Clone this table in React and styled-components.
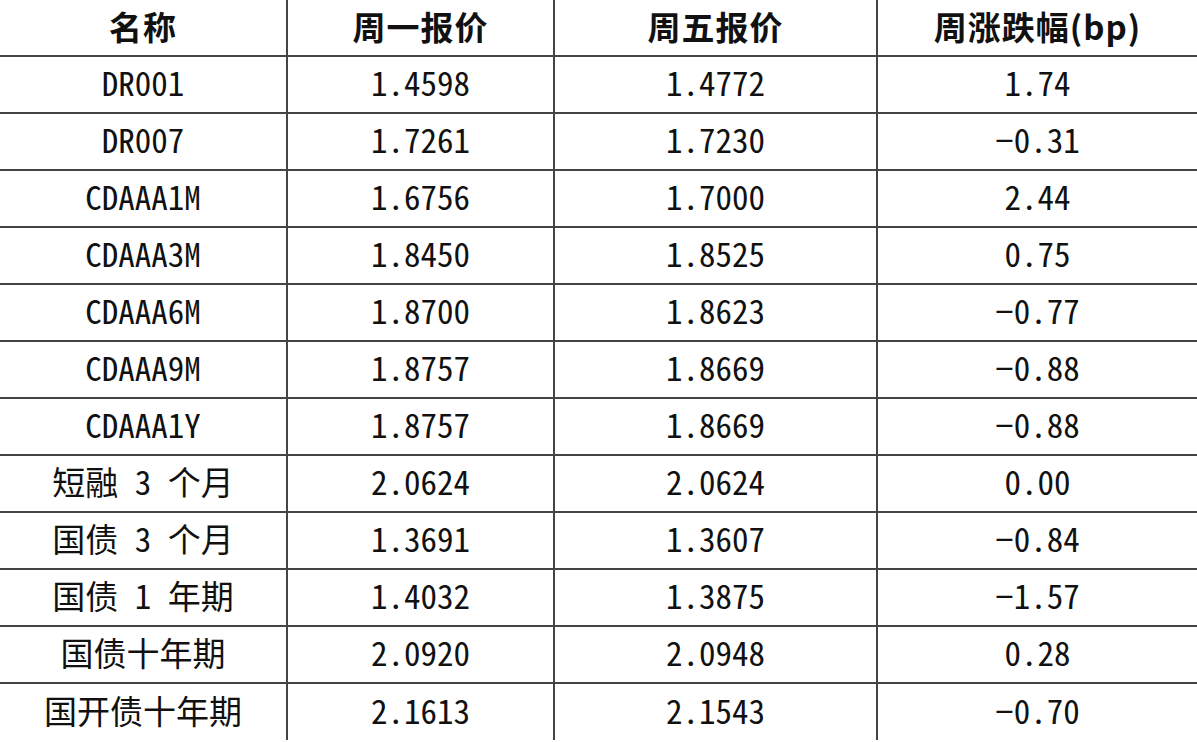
import React from 'react'
import styled, { createGlobalStyle } from 'styled-components'

const GlobalStyle = createGlobalStyle`
  html, body {
    margin: 0;
    padding: 0;
    background: #ffffff;
  }
  body {
    width: 1197px;
    height: 742px;
    overflow: hidden;
  }
`;

const Table = styled.table`
  width: 1197px;
  border-collapse: collapse;
  table-layout: fixed;
  color: #111;
`;

const Col = styled.col`
  width: ${(p) => p.$w}px;
`;

const Row = styled.tr`
  height: ${(p) => (p.$head ? 56 : 57)}px;
  & + & td {
    border-top: 2px solid #444;
  }
`;

const HeadCell = styled.th`
  padding: 0 0 2px;
  text-align: center;
  vertical-align: middle;
  font-family: "Noto Sans CJK SC", "Noto Sans", sans-serif;
  font-weight: 700;
  font-size: 33px;
  letter-spacing: 1px;
  line-height: 1;
  border-bottom: 2px solid #444;
  & + & {
    border-left: 2px solid #444;
  }
`;

const Cell = styled.td`
  padding: 0 0 4px;
  text-align: center;
  vertical-align: middle;
  font-family: "Noto Sans Mono CJK SC", "DejaVu Sans Mono", "Noto Sans CJK SC", monospace;
  font-size: 33px;
  line-height: 1;
  & + & {
    border-left: 2px solid #444;
  }
`;

const headers = ['名称', '周一报价', '周五报价', '周涨跌幅(bp)'];

const rows = [
  ['DR001', '1.4598', '1.4772', '1.74'],
  ['DR007', '1.7261', '1.7230', '−0.31'],
  ['CDAAA1M', '1.6756', '1.7000', '2.44'],
  ['CDAAA3M', '1.8450', '1.8525', '0.75'],
  ['CDAAA6M', '1.8700', '1.8623', '−0.77'],
  ['CDAAA9M', '1.8757', '1.8669', '−0.88'],
  ['CDAAA1Y', '1.8757', '1.8669', '−0.88'],
  ['短融 3 个月', '2.0624', '2.0624', '0.00'],
  ['国债 3 个月', '1.3691', '1.3607', '−0.84'],
  ['国债 1 年期', '1.4032', '1.3875', '−1.57'],
  ['国债十年期', '2.0920', '2.0948', '0.28'],
  ['国开债十年期', '2.1613', '2.1543', '−0.70'],
];

const widths = [287, 267, 323, 320];

const App = () => {
  return (
    <>
      <GlobalStyle />
      <Table>
        <colgroup>
          {widths.map((w, i) => (
            <Col key={i} $w={w} />
          ))}
        </colgroup>
        <thead>
          <Row $head>
            {headers.map((h) => (
              <HeadCell key={h}>{h}</HeadCell>
            ))}
          </Row>
        </thead>
        <tbody>
          {rows.map((r) => (
            <Row key={r[0]}>
              {r.map((v, i) => (
                <Cell key={i}>{v}</Cell>
              ))}
            </Row>
          ))}
        </tbody>
      </Table>
    </>
  )
}

export default App
